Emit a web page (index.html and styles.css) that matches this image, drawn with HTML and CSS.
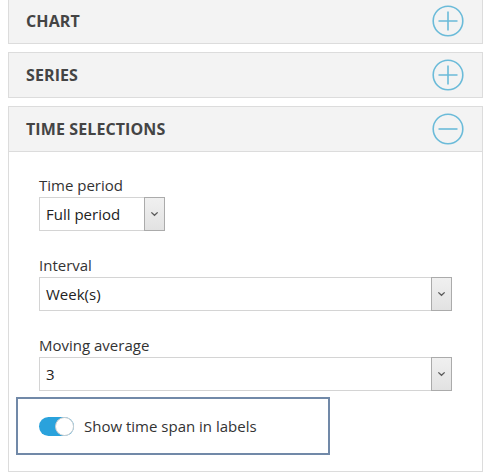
FILE: index.html
```html
<!DOCTYPE html>
<html>
<head>
<meta charset="utf-8">
<link rel="stylesheet" href="styles.css">
</head>
<body>
<div class="page">
  <div class="panel">
    <div class="panel-head">
      <span class="title">CHART</span>
      <svg class="icon" viewBox="0 0 32 32" width="32" height="32"><circle cx="16" cy="16" r="14.8" fill="none" stroke="#6bbbd9" stroke-width="1.6"/><path d="M6.5 16H25.5M16 6.5V25.5" stroke="#6bbbd9" stroke-width="1.6"/></svg>
    </div>
  </div>
  <div class="panel">
    <div class="panel-head">
      <span class="title">SERIES</span>
      <svg class="icon" viewBox="0 0 32 32" width="32" height="32"><circle cx="16" cy="16" r="14.8" fill="none" stroke="#6bbbd9" stroke-width="1.6"/><path d="M6.5 16H25.5M16 6.5V25.5" stroke="#6bbbd9" stroke-width="1.6"/></svg>
    </div>
  </div>
  <div class="panel">
    <div class="panel-head">
      <span class="title">TIME SELECTIONS</span>
      <svg class="icon" viewBox="0 0 32 32" width="32" height="32"><circle cx="16" cy="16" r="14.8" fill="none" stroke="#6bbbd9" stroke-width="1.6"/><path d="M6.5 16H25.5" stroke="#6bbbd9" stroke-width="1.6"/></svg>
    </div>
    <div class="panel-body">
      <div class="field">
        <div class="label">Time period</div>
        <div class="select short">
          <span class="value">Full period</span>
          <span class="btn"><svg viewBox="0 0 10 6" width="9" height="6"><path d="M1.5 1.2L5 4.5 8.5 1.2" fill="none" stroke="#5a5a5a" stroke-width="1.5"/></svg></span>
        </div>
      </div>
      <div class="field">
        <div class="label">Interval</div>
        <div class="select">
          <span class="value">Week(s)</span>
          <span class="btn"><svg viewBox="0 0 10 6" width="9" height="6"><path d="M1.5 1.2L5 4.5 8.5 1.2" fill="none" stroke="#5a5a5a" stroke-width="1.5"/></svg></span>
        </div>
      </div>
      <div class="field last">
        <div class="label">Moving average</div>
        <div class="select">
          <span class="value">3</span>
          <span class="btn"><svg viewBox="0 0 10 6" width="9" height="6"><path d="M1.5 1.2L5 4.5 8.5 1.2" fill="none" stroke="#5a5a5a" stroke-width="1.5"/></svg></span>
        </div>
      </div>
      <div class="toggle-box">
        <span class="toggle"><span class="knob"></span></span>
        <span class="toggle-label">Show time span in labels</span>
      </div>
    </div>
  </div>
</div>
</body>
</html>
```
FILE: styles.css
```css
html, body {
  margin: 0;
  padding: 0;
  background: #fff;
}
body {
  font-family: "Open Sans", "DejaVu Sans", sans-serif;
  color: #333;
}
.page {
  margin-top: -2px;
  padding-left: 8px;
  width: 475px;
}
.panel {
  margin-bottom: 8px;
}
.panel-head {
  display: flex;
  align-items: center;
  justify-content: space-between;
  height: 44px;
  padding: 0 18px 0 17px;
  background: #f3f3f3;
  border: 1px solid #dcdcdc;
}
.title {
  font-weight: 700;
  font-size: 16px;
  color: #444;
  letter-spacing: 0.1px;
}
.icon {
  display: block;
}
.panel-body {
  border: 1px solid #dcdcdc;
  border-top: none;
  padding: 23px 30px 16px 30px;
}
.field {
  margin-bottom: 24px;
}
.field.last {
  margin-bottom: 6px;
}
.label {
  font-size: 15px;
  line-height: 20px;
  margin-bottom: 2px;
  color: #333;
}
.select {
  display: flex;
  height: 34px;
  box-sizing: border-box;
  border: 1px solid #d4d4d4;
  background: #fff;
}
.select.short {
  width: 126px;
}
.value {
  flex: 1;
  display: flex;
  align-items: center;
  padding-left: 6px;
  font-size: 15px;
  color: #222;
}
.btn {
  width: 21px;
  margin: -1px -1px -1px 0;
  box-sizing: border-box;
  border: 1px solid #ababab;
  background: linear-gradient(#f0f0f0, #e2e2e2);
  display: flex;
  align-items: center;
  justify-content: center;
}
.btn svg {
  display: block;
}
.toggle-box {
  margin-left: -23px;
  width: 314px;
  height: 58px;
  box-sizing: border-box;
  border: 2px solid #7189a8;
  display: flex;
  align-items: center;
  padding-left: 21px;
}
.toggle {
  position: relative;
  width: 35px;
  height: 19px;
  border-radius: 10px;
  background: #2aa2dc;
  flex: none;
}
.knob {
  position: absolute;
  right: 0;
  top: 0;
  width: 19px;
  height: 19px;
  box-sizing: border-box;
  border-radius: 50%;
  background: #fff;
  border: 1px solid #cfcfcf;
}
.toggle-label {
  margin-left: 10px;
  font-size: 15px;
  color: #333;
}
```
